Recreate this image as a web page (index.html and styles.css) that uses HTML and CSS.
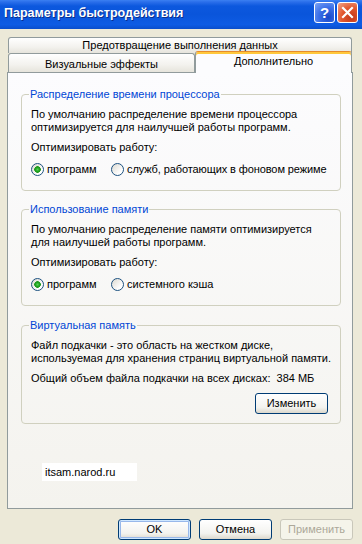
FILE: index.html
```html
<!DOCTYPE html>
<html lang="ru">
<head>
<meta charset="utf-8">
<title>Параметры быстродействия</title>
<link rel="stylesheet" href="styles.css">
</head>
<body>
<div class="window">
  <div class="titlebar">
    <span class="title">Параметры быстродействия</span>
    <div class="tbtns">
      <div class="tbtn help">?</div>
      <div class="tbtn close">
        <svg width="13" height="13" viewBox="0 0 13 13"><path d="M2 2 L11 11 M11 2 L2 11" stroke="#fff" stroke-width="2.2" stroke-linecap="square"/></svg>
      </div>
    </div>
  </div>
  <div class="body">
    <div class="tabrow1"><div class="tab wide">Предотвращение выполнения данных</div></div>
    <div class="tabrow2">
      <div class="tab left">Визуальные эффекты</div>
      <div class="tab sel">Дополнительно</div>
    </div>
    <div class="panel">
      <fieldset class="group">
        <legend>Распределение времени процессора</legend>
        <p class="txt">По умолчанию распределение времени процессора<br>оптимизируется для наилучшей работы программ.</p>
        <p class="lbl">Оптимизировать работу:</p>
        <div class="radios">
          <span class="radio on"><i></i>программ</span>
          <span class="radio tight"><i></i>служб, работающих в фоновом режиме</span>
        </div>
      </fieldset>
      <fieldset class="group">
        <legend>Использование памяти</legend>
        <p class="txt">По умолчанию распределение памяти оптимизируется<br>для наилучшей работы программ.</p>
        <p class="lbl">Оптимизировать работу:</p>
        <div class="radios">
          <span class="radio on"><i></i>программ</span>
          <span class="radio"><i></i>системного кэша</span>
        </div>
      </fieldset>
      <fieldset class="group vm">
        <legend>Виртуальная память</legend>
        <p class="txt">Файл подкачки - это область на жестком диске,<br>используемая для хранения страниц виртуальной памяти.</p>
        <p class="lbl">Общий объем файла подкачки на всех дисках:&nbsp; 384 МБ</p>
        <div class="btnrow"><span class="btn">Изменить</span></div>
      </fieldset>
      <div class="site">itsam.narod.ru</div>
    </div>
    <div class="footer">
      <span class="btn def">OK</span>
      <span class="btn">Отмена</span>
      <span class="btn dis">Применить</span>
    </div>
  </div>
</div>
</body>
</html>
```
FILE: styles.css
```css
html, body {
  margin: 0;
  padding: 0;
}
body {
  width: 362px;
  height: 544px;
  overflow: hidden;
  background: #ECE9D8;
  font-family: "Liberation Sans", Arial, sans-serif;
  font-size: 11px;
  line-height: 13px;
  color: #000;
}
.window {
  width: 362px;
  height: 544px;
}
.titlebar {
  height: 29px;
  display: flex;
  align-items: center;
  justify-content: space-between;
  padding: 0 4px 0 4px;
  box-sizing: border-box;
  background: linear-gradient(#3B80F2 0, #2A6EEA 2px, #0C58DE 6px, #0A55DB 50%, #0E5CE4 85%, #0A4ECC 100%);
}
.title {
  color: #fff;
  font-weight: bold;
  font-size: 12.5px;
  text-shadow: 1px 1px 0 #0A2E8C;
  margin-top: -2px;
}
.tbtns {
  display: flex;
  gap: 2px;
  margin-top: -4px;
}
.tbtn {
  width: 19px;
  height: 19px;
  border: 1px solid #fff;
  border-radius: 3px;
  display: flex;
  align-items: center;
  justify-content: center;
  color: #fff;
  font-weight: bold;
  font-size: 15px;
}
.help {
  background: radial-gradient(circle at 70% 75%, #1848C8 0, #3C70E8 50%, #7BA4F6 100%);
}
.close {
  background: radial-gradient(circle at 70% 75%, #C2381A 0, #E3582F 50%, #F3A88E 100%);
}
.body {
  padding: 8px 9px 0 7px;
}
.tab {
  box-sizing: border-box;
  border: 1px solid #919B9C;
  border-bottom: none;
  border-radius: 3px 3px 0 0;
  background: linear-gradient(#FFFFFF, #F3F2EE 60%, #E6E4DC);
  text-align: center;
}
.tabrow1 {
  margin: 0 1px;
}
.tab.wide {
  height: 16px;
  line-height: 15px;
}
.tabrow2 {
  display: flex;
  margin: 0 1px;
  height: 19px;
}
.tab.left {
  width: 187px;
  height: 19px;
  line-height: 19px;
  padding-top: 1px;
}
.tab.sel {
  flex: 1;
  height: 22px;
  margin-top: -2px;
  margin-bottom: -1px;
  position: relative;
  z-index: 1;
  background: #FCFCFE;
  border-top: 1px solid #E68B2C;
  box-shadow: inset 0 2px 0 #FFC83C;
  line-height: 19px;
}
.panel {
  box-sizing: border-box;
  height: 437px;
  border: 1px solid #919B9C;
  background: linear-gradient(#FCFCFE, #F4F3EE);
  padding: 15px 11px 0 13px;
}
.group {
  margin: 0;
  border: 1px solid #D0D0BF;
  border-radius: 4px;
  padding: 7px 8px 14px 9px;
  min-inline-size: 0;
}
.group + .group {
  margin-top: 12px;
}
.group.vm {
  margin-top: 13px;
  padding-bottom: 9px;
}
.group legend {
  color: #0046D5;
  padding: 0 1px;
  margin-left: -2px;
  line-height: 13px;
}
.txt, .lbl {
  margin: 0;
  white-space: nowrap;
}
.lbl {
  margin-top: 7px;
}
.radios {
  display: flex;
  margin-top: 9px;
  height: 13px;
  white-space: nowrap;
}
.radio {
  display: flex;
  align-items: center;
  gap: 3px;
}
.radio:first-child {
  width: 80px;
  flex: none;
}
.radio.tight {
  letter-spacing: -0.1px;
}
.radio i {
  flex: none;
  box-sizing: border-box;
  width: 13px;
  height: 13px;
  border: 1px solid #1C5180;
  border-radius: 50%;
  background: linear-gradient(135deg, #DCD9D0, #FFFFFF 75%);
}
.radio.on i {
  background: radial-gradient(circle, #55D455 0, #21A121 2px, #1E9A1E 3px, transparent 3.6px), linear-gradient(135deg, #DCD9D0, #FFFFFF 75%);
}
.btnrow {
  display: flex;
  justify-content: flex-end;
  margin-top: 8px;
  padding-right: 4px;
}
.btn {
  box-sizing: border-box;
  width: 73px;
  height: 21px;
  border: 1px solid #003C74;
  border-radius: 3px;
  background: linear-gradient(#FFFFFF, #F3F3EF 70%, #DCD8CC);
  display: flex;
  align-items: center;
  justify-content: center;
}
.btn.def {
  box-shadow: inset 0 0 0 1px #CEE7FF, inset 0 0 0 2px #98B8EA;
}
.btn.dis {
  border-color: #C9C7BA;
  background: #F5F4EA;
  color: #ACA899;
}
.site {
  margin: 39px 0 0 21px;
  width: 95px;
  height: 18px;
  background: #fff;
  line-height: 18px;
  padding-left: 3px;
  box-sizing: border-box;
}
.footer {
  display: flex;
  justify-content: flex-end;
  gap: 8px;
  margin-top: 10px;
}
```
